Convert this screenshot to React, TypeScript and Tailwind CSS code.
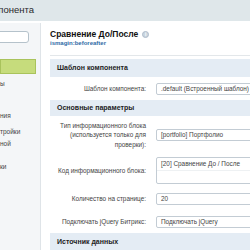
export default function App() {
  return (
    <div className="w-[250px] h-[250px] overflow-hidden bg-white font-['Liberation_Sans',Arial,sans-serif] text-[#000]">
      {/* Dialog title bar */}
      <div className="h-[21px] bg-[#dfe7ea] flex items-center overflow-hidden whitespace-nowrap">
        <span className="ml-[-71px] text-[9.5px] text-[#2a2a2a]">Параметры компонента</span>
      </div>

      <div className="flex mt-[2px] h-[227px]">
        {/* Left navigation */}
        <div className="w-[41px] shrink-0 bg-[#f4f6f8] border-r border-[#dfe4e8] overflow-hidden text-[6.5px] leading-[10px] text-[#444]">
          <div className="mt-[8px] h-[12px] w-[33px] ml-[-4px] bg-white border border-[#b5c2cb] rounded-[3px]" />
          <div className="mt-[16px] h-[15px] w-[36px] bg-[#c6dc7c] border border-[#a9c35c]" />
          <div className="mt-[5px] whitespace-nowrap">ы</div>
          <div className="mt-[22px] whitespace-nowrap">ния</div>
          <div className="mt-[6px] whitespace-nowrap">тройки</div>
          <div className="mt-[2px] whitespace-nowrap">ной</div>
          <div className="mt-[13px] whitespace-nowrap">ки</div>
        </div>

        {/* Main */}
        <div className="flex-1 pl-[9px] overflow-hidden">
          <div className="pt-[6px] flex items-center gap-[4px] whitespace-nowrap">
            <span className="text-[8.5px] font-bold leading-[10px] text-[#111]">Сравнение До/После</span>
            <span className="w-[7px] h-[7px] rounded-full bg-[#c9d4de] border border-[#aebccb] text-[5px] leading-[5px] text-white font-bold flex items-center justify-center">i</span>
          </div>
          <div className="text-[6px] font-bold text-[#2f6ba6] leading-[8px] whitespace-nowrap">ismagin:beforeafter</div>
          <div className="mt-[8px] border-t border-[#e3e7ea] w-[220px]" />

          <div className="mt-[3px] w-[230px] text-[6.4px] text-[#444]">
            <div className="h-[18px] bg-[#e4ecf4] flex items-center pl-[7px] font-bold text-[7px] text-[#222]">Шаблон компонента</div>
            <div className="h-[23px] flex items-center">
              <div className="w-[96px] text-right">Шаблон компонента:</div>
              <div className="ml-[10px] h-[12px] w-[124px] border border-[#c3ccd4] rounded-[2px] flex items-center pl-[4px] whitespace-nowrap">.default (Встроенный шаблон)</div>
            </div>
            <div className="h-[16px] bg-[#e4ecf4] flex items-center pl-[7px] font-bold text-[7px] text-[#222]">Основные параметры</div>
            <div className="h-[38px] flex items-center">
              <div className="w-[96px] text-right leading-[9.5px]">
                Тип информационного блока (используется только для проверки):
              </div>
              <div className="ml-[10px] h-[12px] w-[124px] border border-[#c3ccd4] rounded-[2px] flex items-center pl-[4px] whitespace-nowrap">[portfolio] Портфолио</div>
            </div>
            <div className="h-[33px] flex items-center">
              <div className="w-[96px] text-right">Код информационного блока:</div>
              <div className="ml-[10px] h-[27px] w-[124px] border border-[#c3ccd4] rounded-[2px] flex flex-col">
                <div className="h-[12px] flex items-center pl-[4px] whitespace-nowrap">[20] Сравнение До / После</div>
                <div className="flex-1 border-t border-[#eef1f3]" />
              </div>
            </div>
            <div className="h-[24px] flex items-center">
              <div className="w-[96px] text-right">Количество на странице:</div>
              <div className="ml-[10px] h-[12px] w-[124px] border border-[#c3ccd4] rounded-[2px] flex items-center pl-[4px]">20</div>
            </div>
            <div className="h-[22px] flex items-center">
              <div className="w-[96px] text-right">Подключать jQuery Битрикс:</div>
              <div className="ml-[10px] h-[12px] w-[124px] border border-[#c3ccd4] rounded-[2px] flex items-center pl-[4px] whitespace-nowrap">Подключать jQuery</div>
            </div>
            <div className="h-[18px] bg-[#e4ecf4] flex items-center pl-[7px] font-bold text-[7px] text-[#222]">Источник данных</div>
          </div>
        </div>
      </div>
    </div>
  );
}
